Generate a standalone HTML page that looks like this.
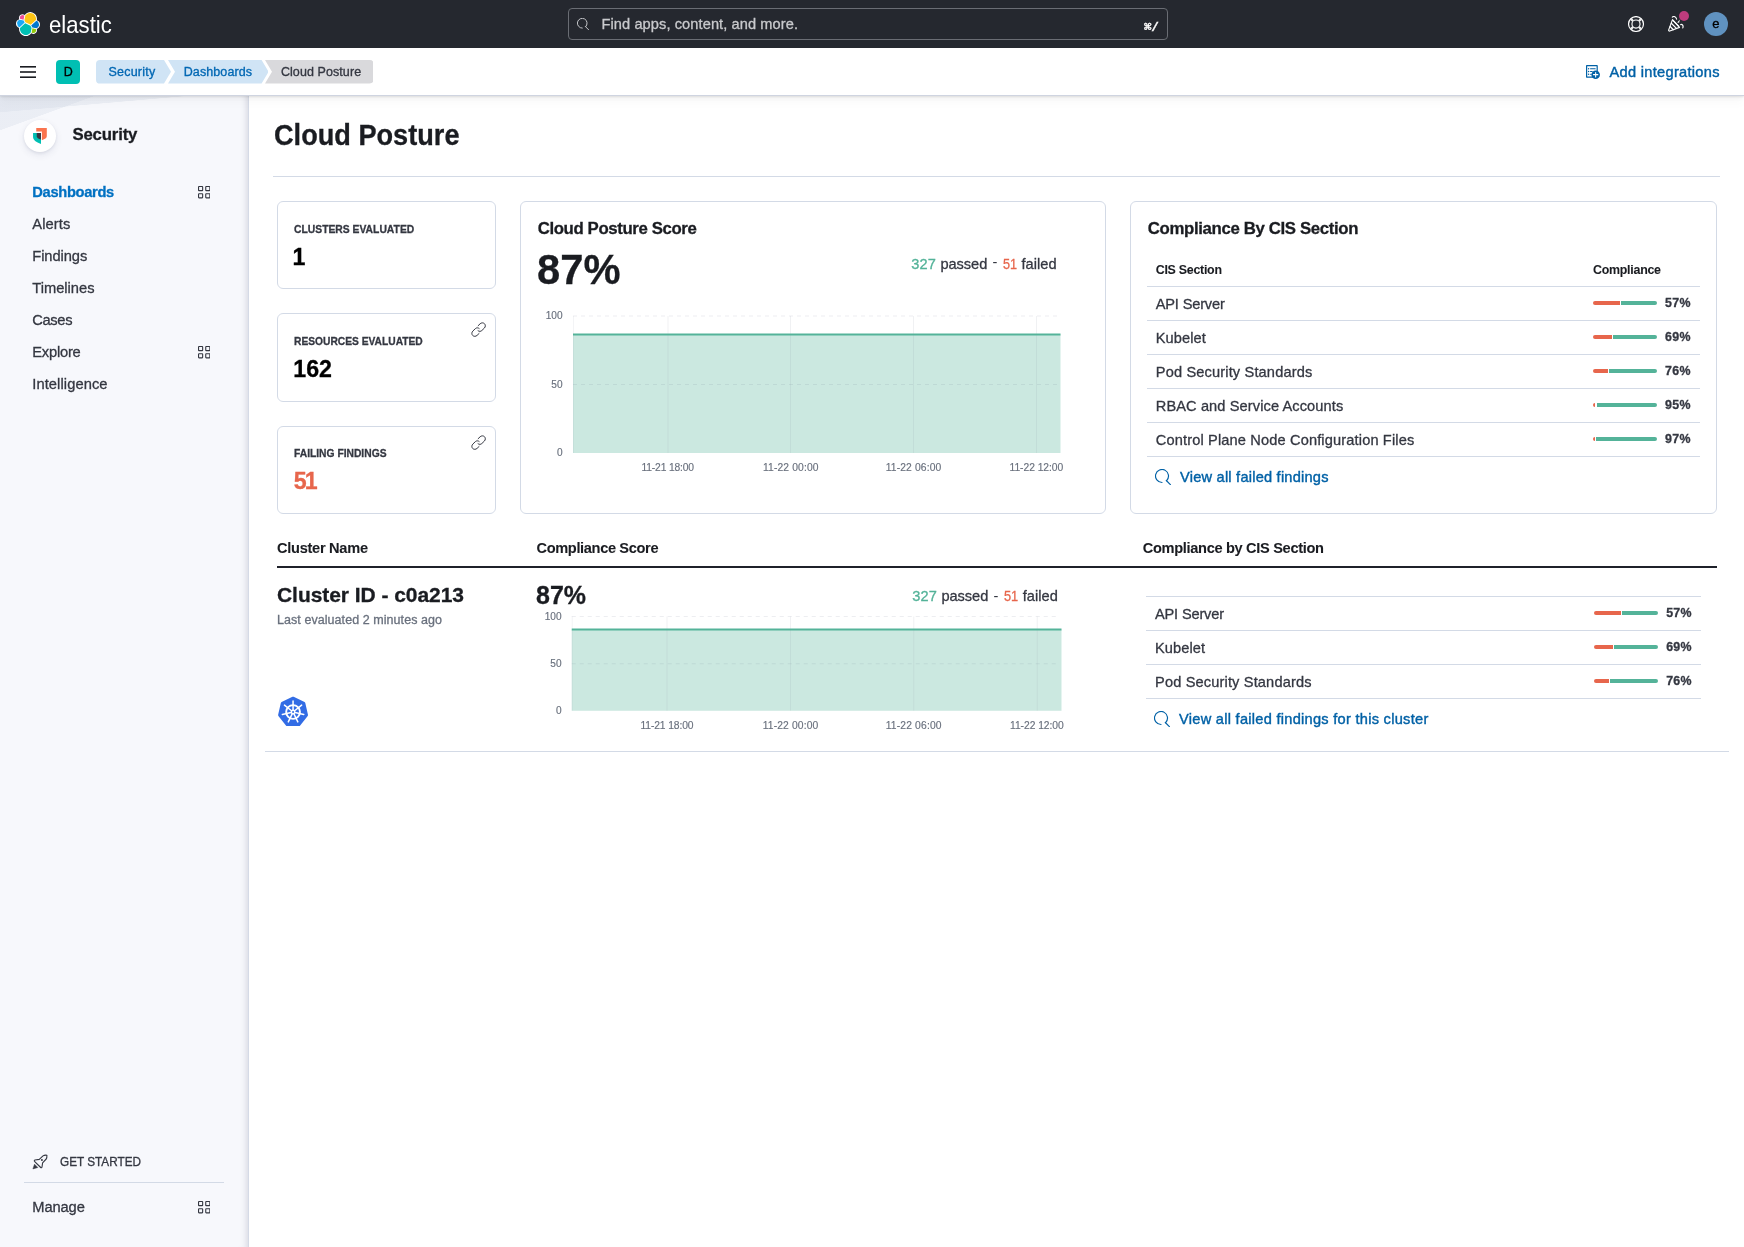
<!DOCTYPE html>
<html lang="en">
<head>
<meta charset="utf-8">
<title>Cloud Posture - Elastic</title>
<style>
*{box-sizing:border-box;margin:0;padding:0}
html,body{width:1744px;height:1247px;overflow:hidden;background:#fff}
body{font-family:"Liberation Sans",sans-serif;color:#343741;font-size:14px;position:relative}
.a{position:absolute;white-space:pre;line-height:1;-webkit-text-stroke:.3px}
.g{will-change:transform}
.b{position:absolute}
#top{position:absolute;left:0;top:0;width:1744px;height:48px;background:#25282f;z-index:6}
#sub{position:absolute;left:0;top:48px;width:1744px;height:48px;background:#fff;border-bottom:1px solid #cfd4e0;box-shadow:0 1px 2px rgba(0,0,0,.085),0 3px 5px rgba(0,0,0,.045),0 7px 10px rgba(0,0,0,.022);z-index:5}
#side{position:absolute;left:0;top:96px;width:249px;height:1151px;background-color:#f7f8fc;background-image:linear-gradient(160deg,rgba(211,218,230,.34) 0,rgba(211,218,230,.34) 32px,rgba(211,218,230,0) 32.500px),linear-gradient(175deg,rgba(211,218,230,.34) 0,rgba(211,218,230,.34) 16px,rgba(211,218,230,0) 16.500px);border-right:1px solid #d5dae6;box-shadow:inset -8px 0 7px -7px rgba(80,90,120,.22);z-index:3}
#main{position:absolute;left:0;top:0;width:1744px;height:1247px;z-index:1}
.card{position:absolute;border:1px solid #d3dae6;border-radius:6px;background:#fff}
.hr{position:absolute;height:1px;background:#d3dae6}
.bar{position:absolute;height:4px;border-radius:2px}
</style>
</head>
<body>
<div id="main" class="g">
<span class="a" style='left:274.00px;top:121.00px;font-size:28.6px;font-weight:700;color:#1a1c21;transform:scaleX(0.9493);transform-origin:0 0'>Cloud Posture</span>
<div class="hr" style="left:273px;top:176px;width:1447px"></div>
<div class="card" style="left:277px;top:201px;width:219px;height:88px"></div>
<div class="card" style="left:277px;top:313px;width:219px;height:89px"></div>
<div class="card" style="left:277px;top:426px;width:219px;height:88px"></div>
<span class="a" style='left:293.50px;top:224.00px;font-size:11.3px;font-weight:700;transform:scaleX(0.9152);transform-origin:0 0'>CLUSTERS EVALUATED</span>
<span class="a" style='left:292.60px;top:246.00px;font-size:23.2px;font-weight:700;color:#000'>1</span>
<span class="a" style='left:293.50px;top:336.00px;font-size:11.3px;font-weight:700;transform:scaleX(0.9063);transform-origin:0 0'>RESOURCES EVALUATED</span>
<span class="a" style='left:293.20px;top:358.00px;font-size:23.2px;font-weight:700;color:#000;letter-spacing:0.056px'>162</span>
<span class="a" style='left:293.50px;top:448.00px;font-size:11.3px;font-weight:700;transform:scaleX(0.9098);transform-origin:0 0'>FAILING FINDINGS</span>
<span class="a" style='left:293.70px;top:470.00px;font-size:23.2px;font-weight:700;color:#e7664c;letter-spacing:-1.797px'>51</span>
<svg class="a" style="left:471.2px;top:322.0px" width="15.2" height="15.2" viewBox="0 0 16 16" ><g fill="none" stroke="#343741" stroke-width="1.05" stroke-linecap="round"><path d="M7.500 3.900L9.600 1.900C11 .6 13 .6 14.200 1.800C15.400 3 15.400 5 14.100 6.400L11.400 9C10.300 10.100 8.600 10.200 7.400 9.200"/><path d="M8.500 12.100L6.400 14.100C5 15.400 3 15.400 1.800 14.200C.6 13 .6 11 1.900 9.600L4.600 7C5.700 5.900 7.400 5.800 8.600 6.800"/></g></svg>
<svg class="a" style="left:471.2px;top:434.8px" width="15.2" height="15.2" viewBox="0 0 16 16" ><g fill="none" stroke="#343741" stroke-width="1.05" stroke-linecap="round"><path d="M7.500 3.900L9.600 1.900C11 .6 13 .6 14.200 1.800C15.400 3 15.400 5 14.100 6.400L11.400 9C10.300 10.100 8.600 10.200 7.400 9.200"/><path d="M8.500 12.100L6.400 14.100C5 15.400 3 15.400 1.800 14.200C.6 13 .6 11 1.900 9.600L4.600 7C5.700 5.900 7.400 5.800 8.600 6.800"/></g></svg>
<div class="card" style="left:520px;top:201px;width:586px;height:312.5px"></div>
<span class="a" style='left:537.75px;top:221.00px;font-size:16.8px;font-weight:700;color:#1a1c21;letter-spacing:-0.388px'>Cloud Posture Score</span>
<span class="a" style='left:537.00px;top:248.00px;font-size:43px;font-weight:700;color:#1a1c21;transform:scaleX(0.9700);transform-origin:0 0'>87%</span>
<span class="a" style='left:911.30px;top:257.00px;font-size:14.6px;color:#54b399;letter-spacing:0.120px'>327</span>
<span class="a" style='left:940.50px;top:257.00px;font-size:14.6px;letter-spacing:-0.062px'>passed</span>
<span class="a" style='left:992.50px;top:255.00px;font-size:14.6px;-webkit-text-stroke:0'>-</span>
<span class="a" style='left:1002.50px;top:257.00px;font-size:14.6px;color:#e7664c;transform:scaleX(0.8685);transform-origin:0 0'>51</span>
<span class="a" style='left:1021.50px;top:257.00px;font-size:14.6px;letter-spacing:0.022px'>failed</span>
<svg class="a" style="left:0;top:0" width="1744" height="800" viewBox="0 0 1744 800"><rect x="573" y="334.5" width="487.5" height="118.5" fill="#54b399" fill-opacity=".3"/><g stroke="#5a6480" stroke-width="1" stroke-dasharray="4 4" stroke-opacity=".11"><path d="M573 316H1057.5"/><path d="M573 384.5H1057.5"/></g><g stroke="#8a93a6" stroke-width="1" stroke-opacity=".13"><path d="M573.5 316V453" stroke-opacity=".1"/><path d="M668 316V453"/><path d="M790.5 316V453"/><path d="M913.5 316V453"/><path d="M1036.5 316V453"/></g><path d="M573 334.5H1060.5" stroke="#54b399" stroke-width="2" fill="none"/></svg>
<span class="a" style='left:545.66px;top:311.00px;font-size:10.1px;color:#69707d;-webkit-text-stroke:.15px'>100</span>
<span class="a" style='left:551.27px;top:380.00px;font-size:10.1px;color:#69707d;-webkit-text-stroke:.15px'>50</span>
<span class="a" style='left:556.88px;top:448.00px;font-size:10.1px;color:#69707d;-webkit-text-stroke:.15px'>0</span>
<span class="a" style='left:641.50px;top:463.00px;font-size:10.3px;color:#69707d;letter-spacing:-0.170px;-webkit-text-stroke:.15px'>11-21 18:00</span>
<span class="a" style='left:763.00px;top:463.00px;font-size:10.3px;color:#69707d;letter-spacing:0.130px;-webkit-text-stroke:.15px'>11-22 00:00</span>
<span class="a" style='left:885.75px;top:463.00px;font-size:10.3px;color:#69707d;letter-spacing:0.130px;-webkit-text-stroke:.15px'>11-22 06:00</span>
<span class="a" style='left:1009.50px;top:463.00px;font-size:10.3px;color:#69707d;letter-spacing:-0.045px;-webkit-text-stroke:.15px'>11-22 12:00</span>
<div class="card" style="left:1130px;top:201px;width:587px;height:312.5px"></div>
<span class="a" style='left:1147.75px;top:221.00px;font-size:16.8px;font-weight:700;color:#1a1c21;letter-spacing:-0.350px'>Compliance By CIS Section</span>
<span class="a" style='left:1155.75px;top:264.00px;font-size:12.4px;font-weight:700;color:#1a1c21;letter-spacing:-0.261px;-webkit-text-stroke:.08px'>CIS Section</span>
<span class="a" style='left:1593.00px;top:264.00px;font-size:12.4px;font-weight:700;color:#1a1c21;letter-spacing:-0.248px;-webkit-text-stroke:.08px'>Compliance</span>
<div class="hr" style="left:1147px;top:286px;width:553px"></div>
<div class="hr" style="left:1147px;top:320px;width:553px"></div>
<div class="hr" style="left:1147px;top:354px;width:553px"></div>
<div class="hr" style="left:1147px;top:388px;width:553px"></div>
<div class="hr" style="left:1147px;top:422px;width:553px"></div>
<div class="hr" style="left:1147px;top:456px;width:553px"></div>
<span class="a" style='left:1155.75px;top:297.00px;font-size:14.6px;letter-spacing:-0.174px'>API Server</span>
<div class="bar" style="left:1593.00px;top:300.90px;width:26.72px;background:#e7664c;border-radius:2px 0 0 2px"></div>
<div class="bar" style="left:1621.02px;top:300.90px;width:35.98px;background:#54b399;border-radius:0 2px 2px 0"></div>
<span class="a" style='left:1665.00px;top:297.00px;font-size:12.4px;font-weight:700;letter-spacing:0.344px'>57%</span>
<span class="a" style='left:1155.75px;top:331.00px;font-size:14.6px;letter-spacing:0.083px'>Kubelet</span>
<div class="bar" style="left:1593.00px;top:334.90px;width:19.04px;background:#e7664c;border-radius:2px 0 0 2px"></div>
<div class="bar" style="left:1613.34px;top:334.90px;width:43.66px;background:#54b399;border-radius:0 2px 2px 0"></div>
<span class="a" style='left:1665.00px;top:331.00px;font-size:12.4px;font-weight:700;letter-spacing:0.344px'>69%</span>
<span class="a" style='left:1155.75px;top:365.00px;font-size:14.6px;letter-spacing:0.151px'>Pod Security Standards</span>
<div class="bar" style="left:1593.00px;top:368.90px;width:14.56px;background:#e7664c;border-radius:2px 0 0 2px"></div>
<div class="bar" style="left:1608.86px;top:368.90px;width:48.14px;background:#54b399;border-radius:0 2px 2px 0"></div>
<span class="a" style='left:1665.00px;top:365.00px;font-size:12.4px;font-weight:700;letter-spacing:0.344px'>76%</span>
<span class="a" style='left:1155.75px;top:399.00px;font-size:14.6px;letter-spacing:0.106px'>RBAC and Service Accounts</span>
<div class="bar" style="left:1593.00px;top:402.90px;width:2.40px;background:#e7664c;border-radius:2px 0 0 2px"></div>
<div class="bar" style="left:1596.70px;top:402.90px;width:60.30px;background:#54b399;border-radius:0 2px 2px 0"></div>
<span class="a" style='left:1665.00px;top:399.00px;font-size:12.4px;font-weight:700;letter-spacing:0.344px'>95%</span>
<span class="a" style='left:1155.75px;top:433.00px;font-size:14.6px;letter-spacing:0.146px'>Control Plane Node Configuration Files</span>
<div class="bar" style="left:1593.00px;top:436.90px;width:1.60px;background:#e7664c;border-radius:2px 0 0 2px"></div>
<div class="bar" style="left:1595.90px;top:436.90px;width:61.10px;background:#54b399;border-radius:0 2px 2px 0"></div>
<span class="a" style='left:1665.00px;top:433.00px;font-size:12.4px;font-weight:700;letter-spacing:0.344px'>97%</span>
<svg class="a" style="left:1155px;top:468.75px" width="16" height="16" viewBox="0 0 16 16" ><g fill="none" stroke="#0061a6" stroke-width="1.15" stroke-linecap="round"><path d="M7 13.5A6.5 6.5 0 1 1 11.6 11.6"/><path d="M11.3 11.5l4.1 4.1"/></g></svg>
<span class="a" style='left:1180.00px;top:470.00px;font-size:14.6px;color:#0061a6;letter-spacing:0.225px;-webkit-text-stroke:.4px'>View all failed findings</span>
<span class="a" style='left:277.00px;top:541.00px;font-size:14.6px;font-weight:700;color:#1a1c21;letter-spacing:-0.281px;-webkit-text-stroke:.08px'>Cluster Name</span>
<span class="a" style='left:536.50px;top:541.00px;font-size:14.6px;font-weight:700;color:#1a1c21;letter-spacing:-0.356px;-webkit-text-stroke:.08px'>Compliance Score</span>
<span class="a" style='left:1142.75px;top:541.00px;font-size:14.6px;font-weight:700;color:#1a1c21;letter-spacing:-0.321px;-webkit-text-stroke:.08px'>Compliance by CIS Section</span>
<div class="b" style="left:277px;top:565.5px;width:1439.5px;height:2px;background:#1f212a"></div>
<span class="a" style='left:277.00px;top:584.00px;font-size:21px;font-weight:700;color:#1a1c21;letter-spacing:-0.052px'>Cluster ID - c0a213</span>
<span class="a" style='left:277.00px;top:614.00px;font-size:12.5px;color:#69707d;letter-spacing:0.062px'>Last evaluated 2 minutes ago</span>
<svg class="a" style="left:277px;top:696.0px" width="32" height="32" viewBox="0 0 32 32" ><polygon points="16.06,2.10 26.93,7.33 29.61,19.09 22.09,28.52 10.03,28.52 2.51,19.09 5.19,7.33" fill="#326ce5" stroke="#326ce5" stroke-width="2.8" stroke-linejoin="round"/><g fill="none" stroke="#fff" stroke-linecap="round"><circle cx="16.06" cy="16.0" r="6.9" stroke-width="1.9"/><path d="M16.06 14.00L16.06 5.00M17.62 14.75L24.66 9.14M18.01 16.45L26.78 18.45M16.93 17.80L20.83 25.91M15.19 17.80L11.29 25.91M14.11 16.45L5.34 18.45M14.50 14.75L7.46 9.14" stroke-width="1.5"/></g><circle cx="16.06" cy="16.0" r="2.4" fill="#fff"/><circle cx="16.06" cy="16.0" r="1" fill="#326ce5"/></svg>
<span class="a" style='left:536.20px;top:583.00px;font-size:25.2px;font-weight:700;color:#1a1c21;transform:scaleX(0.9916);transform-origin:0 0'>87%</span>
<span class="a" style='left:912.20px;top:589.00px;font-size:14.6px;color:#54b399;letter-spacing:0.120px'>327</span>
<span class="a" style='left:941.50px;top:589.00px;font-size:14.6px;letter-spacing:-0.062px'>passed</span>
<span class="a" style='left:993.50px;top:589.00px;font-size:14.6px;-webkit-text-stroke:0'>-</span>
<span class="a" style='left:1003.50px;top:589.00px;font-size:14.6px;color:#e7664c;transform:scaleX(0.8778);transform-origin:0 0'>51</span>
<span class="a" style='left:1022.75px;top:589.00px;font-size:14.6px;letter-spacing:0.022px'>failed</span>
<svg class="a" style="left:0;top:0" width="1744" height="800" viewBox="0 0 1744 800"><rect x="571.75" y="629.5" width="489.75" height="81.25" fill="#54b399" fill-opacity=".3"/><g stroke="#5a6480" stroke-width="1" stroke-dasharray="4 4" stroke-opacity=".11"><path d="M571.75 616.5H1058.5"/><path d="M571.75 663.75H1058.5"/></g><g stroke="#8a93a6" stroke-width="1" stroke-opacity=".13"><path d="M572.25 616.5V710.75" stroke-opacity=".1"/><path d="M667 616.5V710.75"/><path d="M790.5 616.5V710.75"/><path d="M913.75 616.5V710.75"/><path d="M1037.25 616.5V710.75"/></g><path d="M571.75 629.5H1061.5" stroke="#54b399" stroke-width="2" fill="none"/></svg>
<span class="a" style='left:544.66px;top:612.00px;font-size:10.1px;color:#69707d;-webkit-text-stroke:.15px'>100</span>
<span class="a" style='left:550.27px;top:659.00px;font-size:10.1px;color:#69707d;-webkit-text-stroke:.15px'>50</span>
<span class="a" style='left:555.88px;top:706.00px;font-size:10.1px;color:#69707d;-webkit-text-stroke:.15px'>0</span>
<span class="a" style='left:640.50px;top:721.00px;font-size:10.3px;color:#69707d;letter-spacing:-0.120px;-webkit-text-stroke:.15px'>11-21 18:00</span>
<span class="a" style='left:762.75px;top:721.00px;font-size:10.3px;color:#69707d;letter-spacing:0.130px;-webkit-text-stroke:.15px'>11-22 00:00</span>
<span class="a" style='left:885.75px;top:721.00px;font-size:10.3px;color:#69707d;letter-spacing:0.155px;-webkit-text-stroke:.15px'>11-22 06:00</span>
<span class="a" style='left:1010.00px;top:721.00px;font-size:10.3px;color:#69707d;letter-spacing:-0.045px;-webkit-text-stroke:.15px'>11-22 12:00</span>
<div class="hr" style="left:1146px;top:596px;width:555px"></div>
<div class="hr" style="left:1146px;top:630px;width:555px"></div>
<div class="hr" style="left:1146px;top:664px;width:555px"></div>
<div class="hr" style="left:1146px;top:698px;width:555px"></div>
<span class="a" style='left:1155.00px;top:607.00px;font-size:14.6px;letter-spacing:-0.174px'>API Server</span>
<div class="bar" style="left:1594.00px;top:610.90px;width:26.72px;background:#e7664c;border-radius:2px 0 0 2px"></div>
<div class="bar" style="left:1622.02px;top:610.90px;width:35.98px;background:#54b399;border-radius:0 2px 2px 0"></div>
<span class="a" style='left:1666.25px;top:607.00px;font-size:12.4px;font-weight:700;letter-spacing:0.219px'>57%</span>
<span class="a" style='left:1155.00px;top:641.00px;font-size:14.6px;letter-spacing:0.083px'>Kubelet</span>
<div class="bar" style="left:1594.00px;top:644.90px;width:19.04px;background:#e7664c;border-radius:2px 0 0 2px"></div>
<div class="bar" style="left:1614.34px;top:644.90px;width:43.66px;background:#54b399;border-radius:0 2px 2px 0"></div>
<span class="a" style='left:1666.25px;top:641.00px;font-size:12.4px;font-weight:700;letter-spacing:0.219px'>69%</span>
<span class="a" style='left:1155.00px;top:675.00px;font-size:14.6px;letter-spacing:0.151px'>Pod Security Standards</span>
<div class="bar" style="left:1594.00px;top:678.90px;width:14.56px;background:#e7664c;border-radius:2px 0 0 2px"></div>
<div class="bar" style="left:1609.86px;top:678.90px;width:48.14px;background:#54b399;border-radius:0 2px 2px 0"></div>
<span class="a" style='left:1666.25px;top:675.00px;font-size:12.4px;font-weight:700;letter-spacing:0.219px'>76%</span>
<svg class="a" style="left:1154px;top:711.25px" width="16" height="16" viewBox="0 0 16 16" ><g fill="none" stroke="#0061a6" stroke-width="1.15" stroke-linecap="round"><path d="M7 13.5A6.5 6.5 0 1 1 11.6 11.6"/><path d="M11.3 11.5l4.1 4.1"/></g></svg>
<span class="a" style='left:1179.00px;top:712.00px;font-size:14.6px;color:#0061a6;letter-spacing:0.276px;-webkit-text-stroke:.4px'>View all failed findings for this cluster</span>
<div class="hr" style="left:265px;top:751px;width:1463.5px"></div></div>
<div id="side"></div>
<div class="b g" style="left:0;top:0;z-index:4;width:248px;height:1247px">
<div class="b" style="left:24px;top:120px;width:32px;height:32px;border-radius:50%;background:#fff;box-shadow:0 1px 3px rgba(60,70,110,.10),0 3px 7px rgba(60,70,110,.10)"></div>
<svg class="a" style="left:32px;top:128px" width="16" height="16" viewBox="0 0 32 32" ><path fill="#FA744E" d="M8.500 0H29.600V16.700C29.600 20 26 22.600 19.800 24.300V7.200H8.500z"/><path fill="#00BFB3" d="M2.100 10H18V32C8 28 2.100 24 2.100 18z"/><path fill="#343741" d="M9.500 10H18V23.200C12.500 21.500 9.500 19.500 9.500 16.500z"/></svg>
<span class="a" style='left:72.40px;top:127.00px;font-size:16.8px;font-weight:700;color:#1a1c21;letter-spacing:-0.176px'>Security</span>
<span class="a" style='left:32.25px;top:185.00px;font-size:14.7px;font-weight:700;color:#0071c2;letter-spacing:-0.321px'>Dashboards</span>
<span class="a" style='left:32.25px;top:217.00px;font-size:14.7px;letter-spacing:0.091px'>Alerts</span>
<span class="a" style='left:32.25px;top:249.00px;font-size:14.7px;letter-spacing:-0.074px'>Findings</span>
<span class="a" style='left:32.25px;top:281.00px;font-size:14.7px;letter-spacing:-0.008px'>Timelines</span>
<span class="a" style='left:32.25px;top:313.00px;font-size:14.7px;letter-spacing:-0.348px'>Cases</span>
<span class="a" style='left:32.25px;top:345.00px;font-size:14.7px;letter-spacing:-0.219px'>Explore</span>
<span class="a" style='left:32.25px;top:377.00px;font-size:14.7px;letter-spacing:0.085px'>Intelligence</span>
<svg class="a" style="left:197.7px;top:186.3px" width="12.4" height="12.4" viewBox="0 0 12.4 12.4" ><g fill="none" stroke="#343741" stroke-width="1.1"><rect x=".55" y=".55" width="4.1" height="4.1" rx=".5"/><rect x="7.75" y=".55" width="4.1" height="4.1" rx=".5"/><rect x=".55" y="7.75" width="4.1" height="4.1" rx=".5"/><rect x="7.75" y="7.75" width="4.1" height="4.1" rx=".5"/></g></svg>
<svg class="a" style="left:197.7px;top:346.3px" width="12.4" height="12.4" viewBox="0 0 12.4 12.4" ><g fill="none" stroke="#343741" stroke-width="1.1"><rect x=".55" y=".55" width="4.1" height="4.1" rx=".5"/><rect x="7.75" y=".55" width="4.1" height="4.1" rx=".5"/><rect x=".55" y="7.75" width="4.1" height="4.1" rx=".5"/><rect x="7.75" y="7.75" width="4.1" height="4.1" rx=".5"/></g></svg>
<svg class="a" style="left:32px;top:1154px" width="16" height="16" viewBox="0 0 16 16" ><g fill="none" stroke="#343741" stroke-width="1.1" stroke-linejoin="round" stroke-linecap="round"><path d="M14.900 1.200C13.500 1 12 1.200 11 1.900L7.300 5.400L3 6C2.400 6.100 2.100 6.800 2.500 7.300L8.700 13.500C9.200 13.900 9.900 13.600 10 13L10.600 8.800L14.200 5C14.800 4 15 2.500 14.900 1.200Z"/></g><circle cx="9.900" cy="6" r=".95" fill="#343741"/><path d="M2.500 10.200L5.800 13.500L.9 14.900Z" fill="#343741" stroke="#343741" stroke-width=".5" stroke-linejoin="round"/></svg>
<span class="a" style='left:60.30px;top:1156.00px;font-size:12.4px;transform:scaleX(0.9488);transform-origin:0 0'>GET STARTED</span>
<div class="hr" style="left:24px;top:1182px;width:200px"></div>
<span class="a" style='left:32.30px;top:1200.00px;font-size:14.7px;letter-spacing:-0.116px'>Manage</span>
<svg class="a" style="left:197.7px;top:1201.3px" width="12.4" height="12.4" viewBox="0 0 12.4 12.4" ><g fill="none" stroke="#343741" stroke-width="1.1"><rect x=".55" y=".55" width="4.1" height="4.1" rx=".5"/><rect x="7.75" y=".55" width="4.1" height="4.1" rx=".5"/><rect x=".55" y="7.75" width="4.1" height="4.1" rx=".5"/><rect x="7.75" y="7.75" width="4.1" height="4.1" rx=".5"/></g></svg></div>
<div id="sub" style="top:48px"></div>
<div class="b g" style="left:0;top:0;z-index:7;width:1744px;height:96px;pointer-events:none">
<svg class="a" style="left:20px;top:66px" width="16" height="12" viewBox="0 0 16 12" ><g fill="#1a1c21"><rect x="0" y="0" width="16" height="1.6"/><rect x="0" y="5.2" width="16" height="1.6"/><rect x="0" y="10.4" width="16" height="1.6"/></g></svg>
<div class="b" style="left:56px;top:60px;width:24px;height:24px;border-radius:4px;background:#00bfb3"></div>
<span class="a" style='left:63.70px;top:66.00px;font-size:12.5px;color:#000'>D</span>
<svg class="a" style="left:96px;top:60px" width="75" height="23.6" viewBox="0 0 75 24" preserveAspectRatio="none"><path d="M4 0H68L75 12L68 24H4Q0 24 0 20V4Q0 0 4 0Z" fill="#d0e4f5"/></svg>
<svg class="a" style="left:167.6px;top:60px" width="100.6" height="23.6" viewBox="0 0 100.6 24" preserveAspectRatio="none"><path d="M0 0H93.6L100.6 12L93.6 24H0L7 12Z" fill="#d0e4f5"/></svg>
<svg class="a" style="left:264.7px;top:60px" width="108.6" height="23.6" viewBox="0 0 108.6 24" preserveAspectRatio="none"><path d="M0 0H108.6H104.6Q108.6 0 108.6 4V20Q108.6 24 104.6 24H0L7 12Z" fill="#d9d9dc"/></svg>
<span class="a" style='left:108.40px;top:66.00px;font-size:12.5px;color:#0067b3;letter-spacing:0.235px;-webkit-text-stroke:.33px'>Security</span>
<span class="a" style='left:183.70px;top:66.00px;font-size:12.5px;color:#0067b3;letter-spacing:0.110px;-webkit-text-stroke:.33px'>Dashboards</span>
<span class="a" style='left:280.90px;top:66.00px;font-size:12.5px;letter-spacing:0.082px;-webkit-text-stroke:.33px'>Cloud Posture</span>
<svg class="a" style="left:1586px;top:64.7px" width="13.928571428571429" height="13.928571428571429" viewBox="0 0 15 15" ><g fill="none" stroke="#0061a6" stroke-width="1.3"><rect x=".65" y=".65" width="11.4" height="12.4" rx=".25"/></g><g fill="#0061a6"><circle cx="2.800" cy="4" r=".8"/><circle cx="2.800" cy="7" r=".8"/><circle cx="2.800" cy="10" r=".8"/><rect x="4.300" y="3.400" width="6.200" height="1.200" rx=".6"/><rect x="4.300" y="6.400" width="3" height="1.200" rx=".6"/><rect x="4.300" y="9.400" width="2" height="1.200" rx=".6"/><circle cx="10.400" cy="10.400" r="4.600"/></g><path d="M10.400 8v4.800M8 10.400h4.800" stroke="#fff" stroke-width="1.150" stroke-linecap="round"/></svg>
<span class="a" style='left:1609.50px;top:65.00px;font-size:14.6px;color:#0061a6;letter-spacing:0.301px;-webkit-text-stroke:.42px'>Add integrations</span></div>
<div id="top">
<div class="b g" style="left:0;top:0;width:1744px;height:48px">
<svg class="a" style="left:16px;top:12px" width="24" height="24" viewBox="0 0 32 32" ><path fill="#FFF" d="M32 16.77a6.334 6.334 0 00-1.14-3.63 6.269 6.269 0 00-3.049-2.276 9.194 9.194 0 00.155-1.658 9.15 9.15 0 00-1.722-5.374 9.043 9.043 0 00-4.552-3.296 8.982 8.982 0 00-5.607.08 9.011 9.011 0 00-4.457 3.428 4.814 4.814 0 00-5.885.055 4.892 4.892 0 00-1.632 2.474 4.926 4.926 0 00.13 2.967A6.353 6.353 0 001.168 11.825 6.409 6.409 0 000 15.477a6.338 6.338 0 001.146 3.646 6.272 6.272 0 003.064 2.27 9.076 9.076 0 00-.155 1.657 9.122 9.122 0 001.716 5.37 9.018 9.018 0 004.545 3.293 8.959 8.959 0 005.601-.08 8.99 8.99 0 004.452-3.428 4.814 4.814 0 005.88-.058 4.89 4.89 0 001.63-2.471 4.926 4.926 0 00-.127-2.964 6.356 6.356 0 003.077-2.287A6.413 6.413 0 0032 16.77"/><path fill="#FEC514" d="M12.58 13.787l7.002 3.211 7.066-6.213a7.849 7.849 0 00.152-1.557c0-1.692-.539-3.34-1.536-4.704a7.879 7.879 0 00-4.017-2.86 7.826 7.826 0 00-4.922.075 7.884 7.884 0 00-3.926 2.986l-1.177 6.12 1.358 2.942z"/><path fill="#00BFB3" d="M5.333 21.215a7.93 7.93 0 001.39 6.28 7.9 7.9 0 004.027 2.866 7.848 7.848 0 004.935-.083 7.905 7.905 0 003.929-3.003l1.166-6.102-1.556-2.986-7.03-3.215-6.86 6.243z"/><path fill="#F04E98" d="M5.288 9.067l4.8 1.137L11.14 4.73a3.785 3.785 0 00-4.538-.023A3.832 3.832 0 005.23 6.632a3.858 3.858 0 00.058 2.435"/><path fill="#1BA9F5" d="M4.872 10.213a5.294 5.294 0 00-2.555 1.91 5.34 5.34 0 00-.04 6.16 5.28 5.28 0 002.53 1.944l6.734-6.108-1.237-2.65-5.432-1.256z"/><path fill="#93C90E" d="M20.873 27.277a3.736 3.736 0 002.285.785 3.783 3.783 0 003.101-1.63 3.812 3.812 0 00.448-3.484l-4.797-1.125-1.037 5.454z"/><path fill="#07C" d="M21.848 20.563l5.28 1.238a5.34 5.34 0 002.555-1.914 5.384 5.384 0 00.04-6.166 5.325 5.325 0 00-2.535-1.947l-6.906 6.07 1.566 2.72z"/></svg>
<span class="a" style='left:48.60px;top:13.00px;font-size:24.4px;color:#fff;transform:scaleX(0.9083);transform-origin:0 0;-webkit-text-stroke:0'>elastic</span>
<div class="b" style="left:568px;top:8px;width:600px;height:32px;border:1px solid #6a6d74;border-radius:4px"></div>
<svg class="a" style="left:577px;top:18px" width="12" height="12" viewBox="0 0 16 16" ><g fill="none" stroke="#d4d5d8" stroke-width="1.2" stroke-linecap="round"><path d="M7 13.5A6.5 6.5 0 1 1 11.6 11.6"/><path d="M11.3 11.5l4.1 4.1"/></g></svg>
<span class="a" style='left:601.50px;top:17.00px;font-size:14.6px;color:#c9cacd;letter-spacing:0.093px'>Find apps, content, and more.</span>
<span class="a" style='left:1144.00px;top:22.00px;font-size:12.6px;font-weight:700;color:#fff;letter-spacing:-0.300px;font-family:"Liberation Mono","DejaVu Sans Mono",monospace'>⌘/</span>
<svg class="a" style="left:1628px;top:16px" width="16" height="16" viewBox="0 0 16 16" ><g fill="none" stroke="#fff"><circle cx="8" cy="8" r="7.45" stroke-width="1.15"/><circle cx="8" cy="8" r="4.05" stroke-width="1.15"/><path d="M3.150 3.150l1.800 1.800M12.850 3.150l-1.800 1.800M3.150 12.850l1.800-1.800M12.850 12.850l-1.800-1.800" stroke-width="2.300" stroke-opacity=".92"/></g></svg>
<svg class="a" style="left:1668px;top:16px" width="16" height="16" viewBox="0 0 16 16" ><g fill="none" stroke="#fff" stroke-width="1.150" stroke-linecap="round" stroke-linejoin="round"><path d="M4.500 3.600L.7 13.900c-.25.700.4 1.350 1.100 1.100l9.700-3.600z"/><path d="M3.300 7.300l5.100 5.100M2.150 10.500l3.200 3.200M5.100 4.600l5.600 5.600" stroke-width="1.250"/><path d="M4.300 1.100c1.600-1.400 3.900-.2 4.300 2.100M12.700 8.600c1.500-.6 3 .9 2.100 3.300"/></g><path d="M11.900 3.500l-2.700 3.100 1.900.2z" fill="#fff"/></svg>
<div class="b" style="left:1679px;top:11px;width:10px;height:10px;border-radius:50%;background:#be3c7d"></div>
<div class="b" style="left:1704px;top:12px;width:24px;height:24px;border-radius:50%;background:#6092c0"></div>
<span class="a" style='left:1712.30px;top:17.00px;font-size:13px;color:#000'>e</span></div></div>
</body>
</html>
